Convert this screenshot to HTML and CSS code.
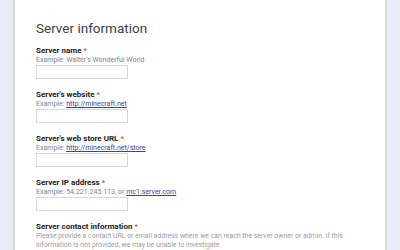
FILE: index.html
```html
<!DOCTYPE html>
<html lang="en">
<head>
  <meta charset="UTF-8">
  <meta name="viewport" content="width=device-width, initial-scale=1.0">
  <title>Server information</title>
  <link rel="stylesheet" href="styles.css">
</head>
<body>
  <div class="card">
    <h1>Server information</h1>

    <div class="field">
      <label>Server name <span class="req">*</span></label>
      <div class="hint">Example: Walter's Wonderful World</div>
      <input type="text" />
    </div>

    <div class="field">
      <label>Server's website <span class="req">*</span></label>
      <div class="hint">Example: <a href="#">http://minecraft.net</a></div>
      <input type="text" />
    </div>

    <div class="field">
      <label>Server's web store URL <span class="req">*</span></label>
      <div class="hint">Example: <a href="#">http://minecraft.net/store</a></div>
      <input type="text" />
    </div>

    <div class="field">
      <label>Server IP address <span class="req">*</span></label>
      <div class="hint">Example: 54.221.245.113, or <a href="#">mc1.server.com</a></div>
      <input type="text" />
    </div>

    <div class="field">
      <label>Server contact information <span class="req">*</span></label>
      <p class="desc">Please provide a contact URL or email address where we can reach the server owner or admin. If this information is not provided, we may be unable to investigate.</p>
    </div>
  </div>
</body>
</html>
```

FILE: styles.css
```css
body {
  margin: 0;
  font-family: Roboto, Arial, sans-serif;
  background-color: #e8eef7;
  height: 250px;
  overflow: hidden;
}
.card {
  margin: 0 13px;
  height: 100%;
  background-color: #ffffff;
  border-left: 2px solid #d3d8df;
  border-right: 2px solid #d3d8df;
  padding: 20px 21px 0;
  box-sizing: border-box;
}
h1 {
  margin: 0 0 10px;
  font-size: 13.5px;
  line-height: 16px;
  font-weight: 400;
  color: #3c4043;
}
.field {
  margin-bottom: 11px;
}
label {
  display: block;
  font-size: 8px;
  line-height: 10px;
  font-weight: bold;
  color: #202124;
}
.req {
  color: #d93025;
  font-weight: normal;
}
.hint {
  font-size: 7px;
  line-height: 9px;
  color: #80868b;
}
.hint a {
  color: #3b3fa6;
}
input {
  display: block;
  width: 92px;
  height: 14px;
  margin: 0;
  padding: 0;
  border: 1px solid #d6d8dc;
  box-sizing: border-box;
}
.desc {
  margin: 0;
  font-size: 6.9px;
  line-height: 9px;
  color: #9aa0a6;
  width: 312px;
}
```
